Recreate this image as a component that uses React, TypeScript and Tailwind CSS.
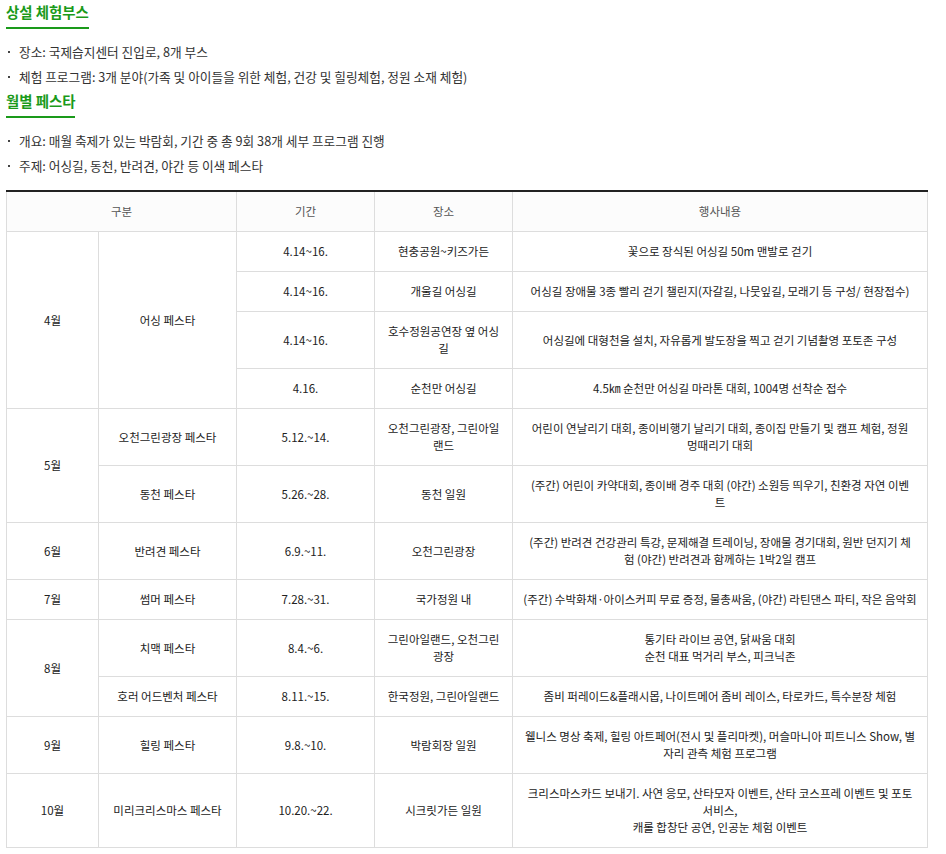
import React from "react";

type Cell = { text: string; rowSpan?: number };
type Row = Cell[];

const font = "font-['Noto_Sans_CJK_KR','Noto_Sans',sans-serif]";

const Section = ({ title, items }: { title: string; items: string[] }) => (
  <div>
    <h3 className="w-fit pt-[2px] pb-[5px] border-b-2 border-[#1a9a1a] text-[14.4px] leading-[20px] font-bold text-[#1a9a1a]">
      {title}
    </h3>
    <ul className="mt-[10px]">
      {items.map((item, i) => (
        <li key={i} className="flex items-center h-[25px] text-[12.7px] text-[#333]">
          <span className="w-[2px] h-[2px] bg-[#444] ml-[2px] mr-[9px]" />
          {item}
        </li>
      ))}
    </ul>
  </div>
);

// line breaks follow the original table
const rows: Row[] = [
  [
    { text: "4월", rowSpan: 4 },
    { text: "어싱 페스타", rowSpan: 4 },
    { text: "4.14~16." },
    { text: "현충공원~키즈가든" },
    { text: "꽃으로 장식된 어싱길 50m 맨발로 걷기" },
  ],
  [
    { text: "4.14~16." },
    { text: "개울길 어싱길" },
    { text: "어싱길 장애물 3종 빨리 걷기 챌린지(자갈길, 나뭇잎길, 모래기 등 구성/ 현장접수)" },
  ],
  [
    { text: "4.14~16." },
    { text: "호수정원공연장 옆 어싱\n길" },
    { text: "어싱길에 대형천을 설치, 자유롭게 발도장을 찍고 걷기 기념촬영 포토존 구성" },
  ],
  [
    { text: "4.16." },
    { text: "순천만 어싱길" },
    { text: "4.5㎞ 순천만 어싱길 마라톤 대회, 1004명 선착순 접수" },
  ],
  [
    { text: "5월", rowSpan: 2 },
    { text: "오천그린광장 페스타" },
    { text: "5.12.~14." },
    { text: "오천그린광장, 그린아일\n랜드" },
    { text: "어린이 연날리기 대회, 종이비행기 날리기 대회, 종이집 만들기 및 캠프 체험, 정원\n멍때리기 대회" },
  ],
  [
    { text: "동천 페스타" },
    { text: "5.26.~28." },
    { text: "동천 일원" },
    { text: "(주간) 어린이 카약대회, 종이배 경주 대회 (야간) 소원등 띄우기, 친환경 자연 이벤\n트" },
  ],
  [
    { text: "6월" },
    { text: "반려견 페스타" },
    { text: "6.9.~11." },
    { text: "오천그린광장" },
    { text: "(주간) 반려견 건강관리 특강, 문제해결 트레이닝, 장애물 경기대회, 원반 던지기 체\n험 (야간) 반려견과 함께하는 1박2일 캠프" },
  ],
  [
    { text: "7월" },
    { text: "썸머 페스타" },
    { text: "7.28.~31." },
    { text: "국가정원 내" },
    { text: "(주간) 수박화채·아이스커피 무료 증정, 물총싸움, (야간) 라틴댄스 파티, 작은 음악회" },
  ],
  [
    { text: "8월", rowSpan: 2 },
    { text: "치맥 페스타" },
    { text: "8.4.~6." },
    { text: "그린아일랜드, 오천그린\n광장" },
    { text: "통기타 라이브 공연, 닭싸움 대회\n순천 대표 먹거리 부스, 피크닉존" },
  ],
  [
    { text: "호러 어드벤처 페스타" },
    { text: "8.11.~15." },
    { text: "한국정원, 그린아일랜드" },
    { text: "좀비 퍼레이드&플래시몹, 나이트메어 좀비 레이스, 타로카드, 특수분장 체험" },
  ],
  [
    { text: "9월" },
    { text: "힐링 페스타" },
    { text: "9.8.~10." },
    { text: "박람회장 일원" },
    { text: "웰니스 명상 축제, 힐링 아트페어(전시 및 플리마켓), 머슬마니아 피트니스 Show, 별\n자리 관측 체험 프로그램" },
  ],
  [
    { text: "10월" },
    { text: "미리크리스마스 페스타" },
    { text: "10.20.~22." },
    { text: "시크릿가든 일원" },
    { text: "크리스마스카드 보내기. 사연 응모, 산타모자 이벤트, 산타 코스프레 이벤트 및 포토\n서비스,\n캐롤 합창단 공연, 인공눈 체험 이벤트" },
  ],
];

export default function App() {
  return (
    <div className={`${font} w-[946px] bg-white pl-[6px]`}>
      <Section
        title="상설 체험부스"
        items={[
          "장소: 국제습지센터 진입로, 8개 부스",
          "체험 프로그램: 3개 분야(가족 및 아이들을 위한 체험, 건강 및 힐링체험, 정원 소재 체험)",
        ]}
      />
      <Section
        title="월별 페스타"
        items={["개요: 매월 축제가 있는 박람회, 기간 중 총 9회 38개 세부 프로그램 진행", "주제: 어싱길, 동천, 반려견, 야간 등 이색 페스타"]}
      />
      <table className="mt-[12px] w-[921px] table-fixed border-collapse border-t-2 border-t-[#222] text-[11.5px] leading-[17px] text-center">
        <colgroup>
          <col className="w-[92px]" />
          <col className="w-[138px]" />
          <col className="w-[138px]" />
          <col className="w-[138px]" />
          <col className="w-[415px]" />
        </colgroup>
        <thead>
          <tr className="bg-[#fcfcfc] text-[#555]">
            <th colSpan={2} className="border border-[#ddd] border-t-0 font-normal px-2 py-[11px]">
              구분
            </th>
            <th className="border border-[#ddd] border-t-0 font-normal px-2 py-[11px]">기간</th>
            <th className="border border-[#ddd] border-t-0 font-normal px-2 py-[11px]">장소</th>
            <th className="border border-[#ddd] border-t-0 font-normal px-2 py-[11px]">행사내용</th>
          </tr>
        </thead>
        <tbody className="text-[#222]">
          {rows.map((row, i) => (
            <tr key={i}>
              {row.map((cell, j) => (
                <td
                  key={j}
                  rowSpan={cell.rowSpan}
                  className="border border-[#ddd] px-2 py-[11px] align-middle whitespace-pre-line"
                >
                  {cell.text}
                </td>
              ))}
            </tr>
          ))}
        </tbody>
      </table>
    </div>
  );
}
